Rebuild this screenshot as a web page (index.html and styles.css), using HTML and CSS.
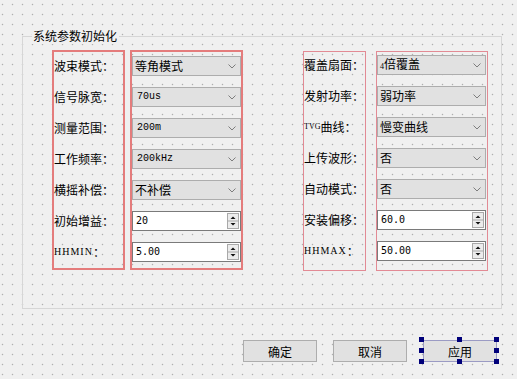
FILE: index.html
```html
<!DOCTYPE html>
<html lang="zh">
<head>
<meta charset="utf-8">
<title>系统参数初始化</title>
<link rel="stylesheet" href="styles.css">
</head>
<body>
<div class="canvas">
  <div class="group">
    <div class="group-title">系统参数初始化</div>

    <div class="box lbox">
      <div class="row">波束模式：</div>
      <div class="row">信号脉宽：</div>
      <div class="row">测量范围：</div>
      <div class="row">工作频率：</div>
      <div class="row">横摇补偿：</div>
      <div class="row">初始增益：</div>
      <div class="row"><span class="ser">HHMIN</span>：</div>
    </div>

    <div class="box fbox">
      <div class="row combo"><span>等角模式</span><svg class="chev" width="8" height="5" viewBox="0 0 8 5"><polyline points="0.5,0.5 4,4 7.5,0.5" fill="none" stroke="#7d7d7d" stroke-width="1"/></svg></div>
      <div class="row combo"><span class="m">70us</span><svg class="chev" width="8" height="5" viewBox="0 0 8 5"><polyline points="0.5,0.5 4,4 7.5,0.5" fill="none" stroke="#7d7d7d" stroke-width="1"/></svg></div>
      <div class="row combo"><span class="m">200m</span><svg class="chev" width="8" height="5" viewBox="0 0 8 5"><polyline points="0.5,0.5 4,4 7.5,0.5" fill="none" stroke="#7d7d7d" stroke-width="1"/></svg></div>
      <div class="row combo"><span class="m">200kHz</span><svg class="chev" width="8" height="5" viewBox="0 0 8 5"><polyline points="0.5,0.5 4,4 7.5,0.5" fill="none" stroke="#7d7d7d" stroke-width="1"/></svg></div>
      <div class="row combo"><span>不补偿</span><svg class="chev" width="8" height="5" viewBox="0 0 8 5"><polyline points="0.5,0.5 4,4 7.5,0.5" fill="none" stroke="#7d7d7d" stroke-width="1"/></svg></div>
      <div class="row spin"><span class="n">20</span><svg class="spinbtn" width="12" height="16" viewBox="0 0 12 16"><rect x="0.5" y="0.5" width="11" height="15" fill="#ececec" stroke="#a9a9a9"/><line x1="1" y1="8" x2="11" y2="8" stroke="#a9a9a9"/><polygon points="3.5,6 6,3.5 8.5,6" fill="#111"/><polygon points="3.5,10 6,12.5 8.5,10" fill="#111"/></svg></div>
      <div class="row spin"><span class="n">5.00</span><svg class="spinbtn" width="12" height="16" viewBox="0 0 12 16"><rect x="0.5" y="0.5" width="11" height="15" fill="#ececec" stroke="#a9a9a9"/><line x1="1" y1="8" x2="11" y2="8" stroke="#a9a9a9"/><polygon points="3.5,6 6,3.5 8.5,6" fill="#111"/><polygon points="3.5,10 6,12.5 8.5,10" fill="#111"/></svg></div>
    </div>

    <div class="box rlbox thin">
      <div class="row">覆盖扇面：</div>
      <div class="row">发射功率：</div>
      <div class="row"><span class="ser small">TVG</span>曲线：</div>
      <div class="row">上传波形：</div>
      <div class="row">自动模式：</div>
      <div class="row">安装偏移：</div>
      <div class="row"><span class="ser">HHMAX</span>：</div>
    </div>

    <div class="box rfbox thin">
      <div class="row combo"><span><span class="ser small">4</span>倍覆盖</span><svg class="chev" width="8" height="5" viewBox="0 0 8 5"><polyline points="0.5,0.5 4,4 7.5,0.5" fill="none" stroke="#7d7d7d" stroke-width="1"/></svg></div>
      <div class="row combo"><span>弱功率</span><svg class="chev" width="8" height="5" viewBox="0 0 8 5"><polyline points="0.5,0.5 4,4 7.5,0.5" fill="none" stroke="#7d7d7d" stroke-width="1"/></svg></div>
      <div class="row combo"><span>慢变曲线</span><svg class="chev" width="8" height="5" viewBox="0 0 8 5"><polyline points="0.5,0.5 4,4 7.5,0.5" fill="none" stroke="#7d7d7d" stroke-width="1"/></svg></div>
      <div class="row combo"><span>否</span><svg class="chev" width="8" height="5" viewBox="0 0 8 5"><polyline points="0.5,0.5 4,4 7.5,0.5" fill="none" stroke="#7d7d7d" stroke-width="1"/></svg></div>
      <div class="row combo"><span>否</span><svg class="chev" width="8" height="5" viewBox="0 0 8 5"><polyline points="0.5,0.5 4,4 7.5,0.5" fill="none" stroke="#7d7d7d" stroke-width="1"/></svg></div>
      <div class="row spin"><span class="n">60.0</span><svg class="spinbtn" width="12" height="16" viewBox="0 0 12 16"><rect x="0.5" y="0.5" width="11" height="15" fill="#ececec" stroke="#a9a9a9"/><line x1="1" y1="8" x2="11" y2="8" stroke="#a9a9a9"/><polygon points="3.5,6 6,3.5 8.5,6" fill="#111"/><polygon points="3.5,10 6,12.5 8.5,10" fill="#111"/></svg></div>
      <div class="row spin"><span class="n">50.00</span><svg class="spinbtn" width="12" height="16" viewBox="0 0 12 16"><rect x="0.5" y="0.5" width="11" height="15" fill="#ececec" stroke="#a9a9a9"/><line x1="1" y1="8" x2="11" y2="8" stroke="#a9a9a9"/><polygon points="3.5,6 6,3.5 8.5,6" fill="#111"/><polygon points="3.5,10 6,12.5 8.5,10" fill="#111"/></svg></div>
    </div>
  </div>

  <div class="buttons">
    <div class="btn">确定</div>
    <div class="btn">取消</div>
    <div class="btn selected">应用
      <span class="handle h-tl"></span><span class="handle h-tm"></span><span class="handle h-tr"></span>
      <span class="handle h-ml"></span><span class="handle h-mr"></span>
      <span class="handle h-bl"></span><span class="handle h-bm"></span><span class="handle h-br"></span>
    </div>
  </div>
</div>
</body>
</html>
```

FILE: styles.css
```css
html, body {
  margin: 0;
  padding: 0;
}

body {
  width: 517px;
  height: 379px;
  overflow: hidden;
  background-color: #f0f0f0;
  background-image: radial-gradient(circle at 2.5px 4.5px, #b0b0b0 0.55px, rgba(176,176,176,0) 1.1px);
  background-size: 10px 10px;
  font-family: "Noto Sans CJK SC", "Noto Sans", sans-serif;
  font-size: 12px;
  color: #000;
}

.canvas {
  padding: 36px 15px 0 22px;
}

.group {
  position: relative;
  height: 273px;
  box-sizing: border-box;
  border: 1px solid #d6d6d6;
  display: flex;
  align-items: flex-start;
  padding: 13px 0 0 29px;
}

.group-title {
  position: absolute;
  left: 9px;
  top: -9px;
  line-height: 16px;
  padding: 0 2px 0 1px;
  background: #f0f0f0;
  font-size: 12px;
}

.box {
  box-sizing: border-box;
  height: 220px;
  border: 2px solid #e47c7c;
  padding-top: 4px;
  display: flex;
  flex-direction: column;
  gap: 11px;
}

.box.thin {
  border-width: 1px;
  border-color: #e28a94;
  margin-top: 1px;
  padding-top: 3px;
}

.lbox { width: 73px; }
.fbox { width: 113px; margin-left: 5px; }
.rlbox { width: 63px; margin-left: 60px; }
.rfbox { width: 112px; margin-left: 10px; }

.row {
  flex: none;
  height: 20px;
  display: flex;
  align-items: center;
  white-space: nowrap;
  line-height: 20px;
}

.combo, .spin {
  width: 109px;
  box-sizing: border-box;
  justify-content: space-between;
  padding-left: 2px;
}

.combo {
  border: 1px solid #adadad;
  background: #e1e1e1;
  padding-right: 4px;
}

.spin {
  border: 1px solid #7a7a7a;
  background: #fff;
  padding-right: 1px;
  padding-left: 3px;
}

.chev { display: block; }
.spinbtn { display: block; }

.m {
  font-family: "Liberation Mono", monospace;
  font-size: 10px;
  padding-left: 2px;
}

.n {
  font-family: "DejaVu Sans Mono", monospace;
  font-size: 10px;
}

.ser {
  font-family: "Liberation Serif", serif;
  font-size: 10px;
  letter-spacing: 1px;
}

.ser.small {
  font-size: 8px;
  letter-spacing: 0;
}

.buttons {
  display: flex;
  justify-content: flex-end;
  gap: 16px;
  margin-top: 31px;
  margin-right: 5px;
}

.btn {
  position: relative;
  width: 74px;
  height: 22px;
  box-sizing: border-box;
  border: 1px solid #adadad;
  background: #e1e1e1;
  display: flex;
  align-items: center;
  justify-content: center;
  font-size: 12px;
}

.btn.selected {
  border-color: #9b9bc4;
}

.handle {
  position: absolute;
  width: 5px;
  height: 5px;
  background: #00007a;
}

.h-tl { left: -5px; top: -4px; }
.h-tm { left: 33px; top: -4px; }
.h-tr { left: 70px; top: -4px; }
.h-ml { left: -5px; top: 7px; }
.h-mr { left: 70px; top: 7px; }
.h-bl { left: -5px; top: 18px; }
.h-bm { left: 33px; top: 18px; }
.h-br { left: 70px; top: 18px; }
```
